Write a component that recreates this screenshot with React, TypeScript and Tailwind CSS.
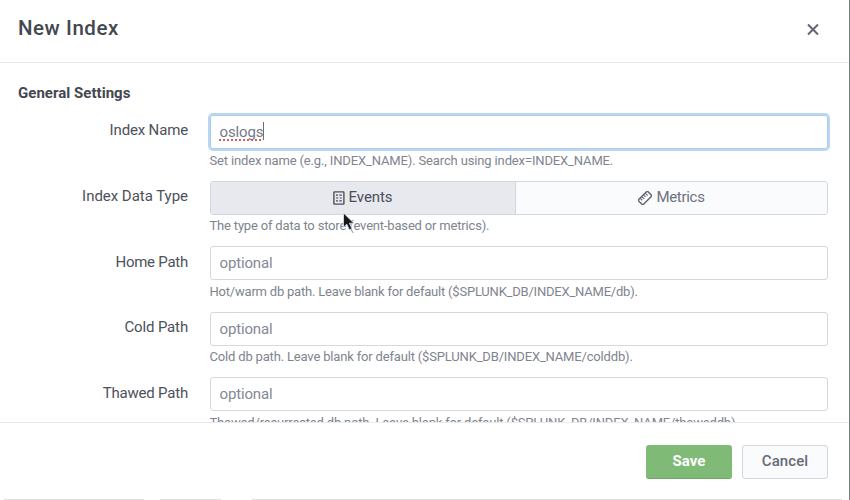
import type { ReactNode } from "react";

function EventsIcon() {
  return (
    <svg width="12" height="14" viewBox="0 0 12 14" fill="none" stroke="#4a4f59" strokeWidth="1.4">
      <rect x="0.9" y="0.9" width="10" height="12.2" rx="0.6" />
      <path d="M3 4.2h2M6.3 4.2h2.5M3 7h2.3M6.8 7h2M3 9.8h2M6.3 9.8h2.5" strokeWidth="1.2" />
    </svg>
  );
}

function MetricsIcon() {
  return (
    <svg width="14" height="14" viewBox="0 0 14 14" fill="none" stroke="#626772" strokeWidth="1.5">
      <g transform="rotate(-45 7 7)">
        <rect x="0.4" y="3.6" width="13.2" height="6.8" rx="1.1" />
        <path d="M3.4 3.7v2.9M5.8 3.7v3.4M8.2 3.7v2.9M10.6 3.7v3.4" strokeWidth="1.1" />
      </g>
    </svg>
  );
}

function Pointer() {
  return (
    <svg className="absolute left-[342px] top-[212px]" width="14" height="21" viewBox="0 0 14 21">
      <path d="M1.5 1v14.2l3.3-3 2.5 5.6 2.6-1.1-2.5-5.5h4.5z" fill="#15171b" stroke="#e4e5e8" strokeWidth="0.8" />
    </svg>
  );
}

type RowProps = {
  label: string;
  labelClass: string;
  help: ReactNode;
  helpClass: string;
  height: string;
  children: ReactNode;
};

function Row({ label, labelClass, help, helpClass, height, children }: RowProps) {
  return (
    <div className={`flex shrink-0 ${height}`}>
      <div className={`w-[188px] text-right text-[15px] leading-5 text-[#4d515a] ${labelClass}`}>{label}</div>
      <div className="ml-[22px] w-[618px]">
        {children}
        <div className={`-ml-[0.5px] whitespace-nowrap text-[13px] leading-4 text-[#80848f] ${helpClass}`}>{help}</div>
      </div>
    </div>
  );
}

function PathBox() {
  return (
    <div className="h-[34px] rounded-[3px] border border-[#d6d8dd] pl-[8.5px] text-[15px] leading-8 tracking-[-0.15px] text-[#858994]">
      optional
    </div>
  );
}

export default function App() {
  return (
    <div className="relative flex h-[500px] w-[850px] flex-col overflow-hidden border-r border-[#777b83] bg-white font-['Roboto',sans-serif]">
      <header className="flex h-[63px] shrink-0 items-start justify-between border-b border-[#e9eaed] pl-[18px] pr-[30px]">
        <h1 className="pt-[14px] text-[20.5px] font-medium leading-7 tracking-[0.55px] text-[#43474f]">New Index</h1>
        <svg className="mt-[23px]" width="12" height="13" viewBox="0 0 12 13" fill="none" stroke="#626670" strokeWidth="2">
          <path d="M1 1.5l10 10M11 1.5l-10 10" />
        </svg>
      </header>
      <main className="flex h-[359px] shrink-0 flex-col overflow-hidden">
        <h2 className="h-[52px] shrink-0 pl-[18px] pt-5 text-[15px] font-bold leading-5 tracking-[0.03px] text-[#43474f]">General Settings</h2>
        <Row
          label="Index Name"
          labelClass="pt-[5px] tracking-[-0.15px]"
          height="h-[66px]"
          help="Set index name (e.g., INDEX_NAME). Search using index=INDEX_NAME."
          helpClass="mt-1 tracking-[-0.14px]"
        >
          <div className="h-[34px] rounded-[3px] border border-[#aecbea] pl-[8.5px] pt-[6px] text-[15px] leading-5 tracking-[-0.15px] text-[#747984] ring-2 ring-[#b9d6f4]">
            <span className="inline-block h-[18px] border-r border-[#6a6e78] leading-5 underline decoration-[#dc5b55] decoration-dotted decoration-[1.5px] underline-offset-2 [text-decoration-skip-ink:none]">oslogs</span>
          </div>
        </Row>
        <Row
          label="Index Data Type"
          labelClass="pt-[5px] tracking-[-0.03px]"
          height="h-[65px]"
          help="The type of data to store (event-based or metrics)."
          helpClass="mt-[3px] tracking-[-0.18px]"
        >
          <div className="flex h-[34px] overflow-hidden rounded-[3px] border border-[#d3d6dd] text-[15px] leading-5">
            <div className="flex w-[305px] items-center justify-center gap-1 border-r border-[#d3d6dd] bg-[#e7e9ef] pr-px text-[#4a4f59]">
              <EventsIcon />
              <span className="-mt-0.5 tracking-[-0.1px]">Events</span>
            </div>
            <div className="flex flex-1 items-center justify-center gap-1 bg-[#fafbfd] text-[#6d727d]">
              <MetricsIcon />
              <span className="-mt-0.5 tracking-[-0.3px]">Metrics</span>
            </div>
          </div>
        </Row>
        <Row
          label="Home Path"
          labelClass="pt-[6px] tracking-[-0.25px]"
          height="h-[66px]"
          help="Hot/warm db path. Leave blank for default ($SPLUNK_DB/INDEX_NAME/db)."
          helpClass="mt-1 tracking-[-0.21px]"
        >
          <PathBox />
        </Row>
        <Row
          label="Cold Path"
          labelClass="pt-[5px] tracking-[-0.15px]"
          height="h-[65px]"
          help="Cold db path. Leave blank for default ($SPLUNK_DB/INDEX_NAME/colddb)."
          helpClass="mt-[3px] tracking-[-0.17px]"
        >
          <PathBox />
        </Row>
        <Row
          label="Thawed Path"
          labelClass="pt-[6px] tracking-[-0.2px]"
          height="h-[66px]"
          help="Thawed/resurrected db path. Leave blank for default ($SPLUNK_DB/INDEX_NAME/thaweddb)."
          helpClass="mt-1 tracking-[-0.17px]"
        >
          <PathBox />
        </Row>
      </main>
      <footer className="flex h-[77px] shrink-0 justify-end gap-[10px] border-t border-[#e9eaed] pr-[21px] pt-[22px] text-[15px] leading-5">
        <div className="flex h-[34px] w-[86px] items-center justify-center rounded-[3px] border-b border-[#6fa467] bg-[#80ba77] pb-px font-bold text-white">Save</div>
        <div className="flex h-[34px] w-[86px] items-center justify-center rounded-[3px] border border-[#d3d6dd] bg-[#fafbfd] pb-[3px] font-medium tracking-[0.1px] text-[#666b76]">Cancel</div>
      </footer>
      <div className="flex h-px shrink-0 pl-1">
        <div className="w-[140px] bg-[#dedfe1]" />
        <div className="ml-4 w-[61px] bg-[#dedfe1]" />
        <div className="ml-[31px] w-[590px] bg-[#dedfe1]" />
      </div>
      <Pointer />
    </div>
  );
}
